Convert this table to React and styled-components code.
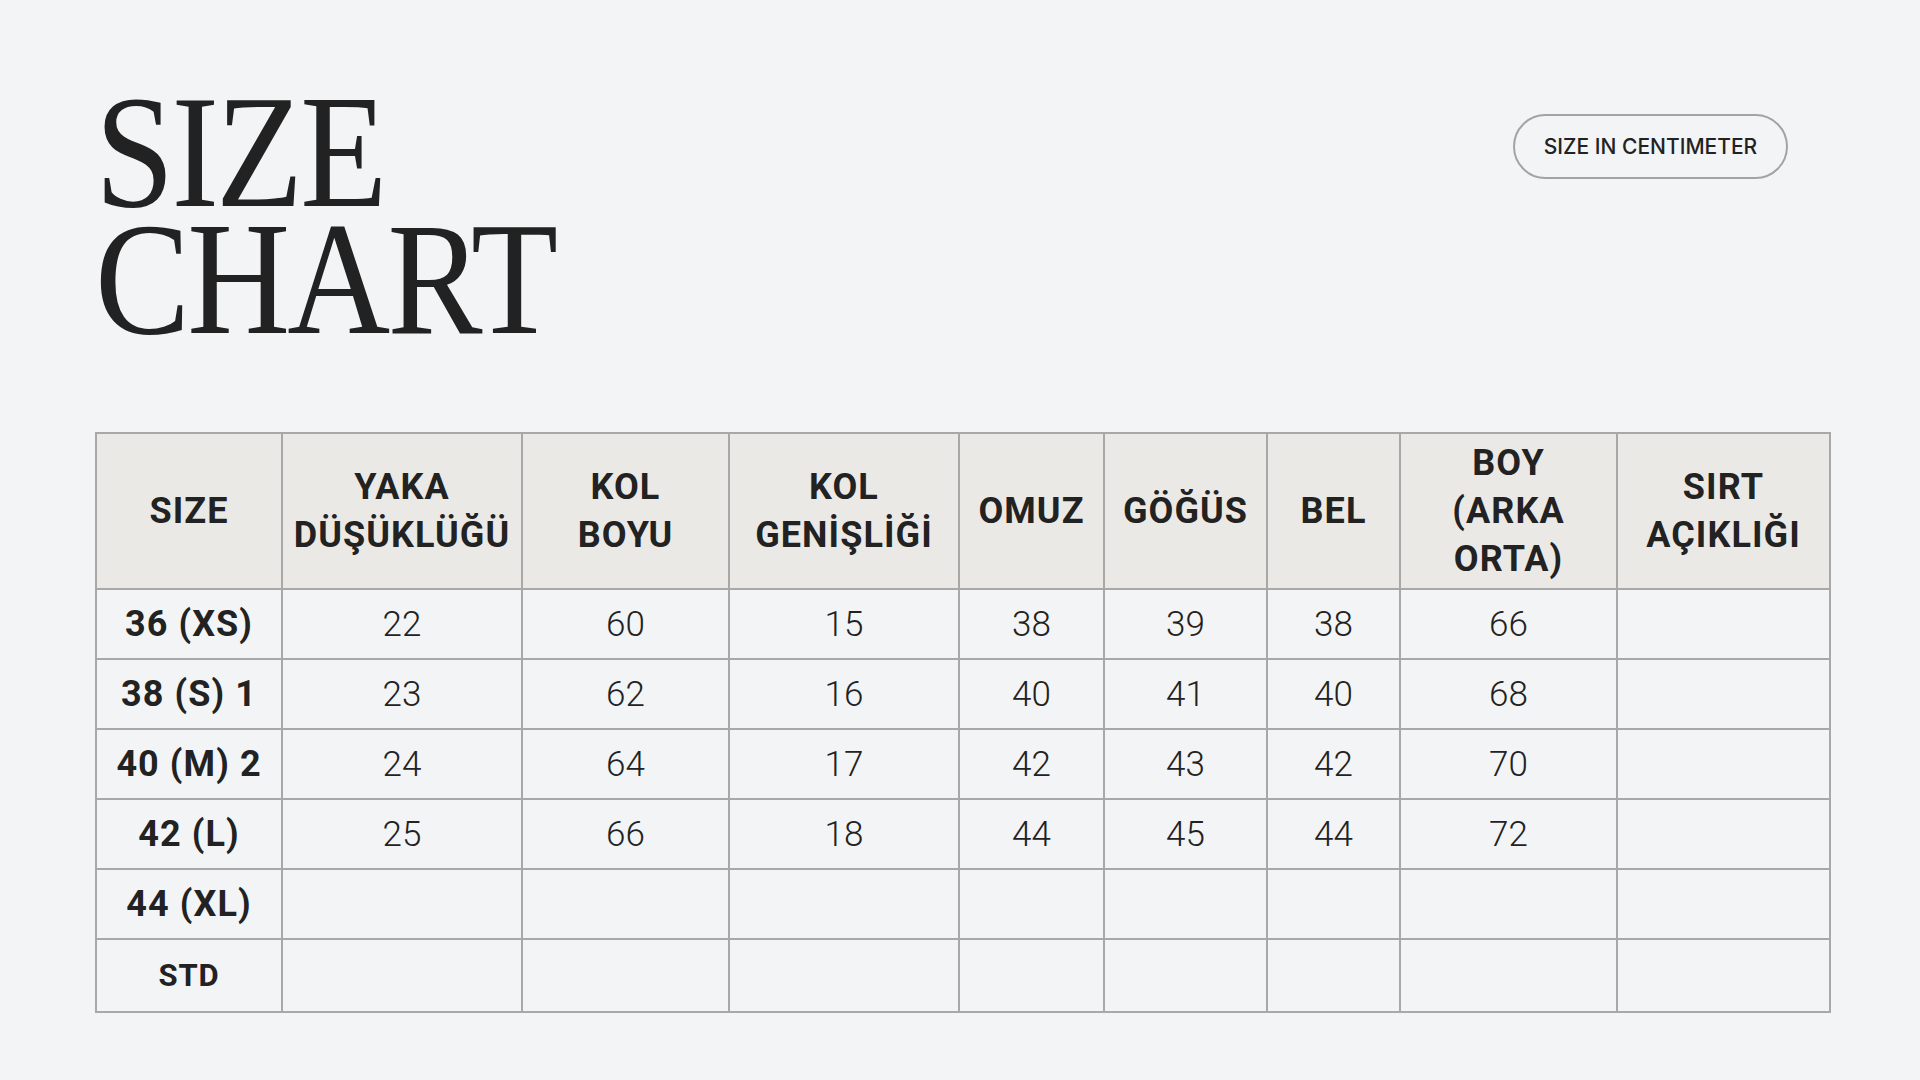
import styled, { createGlobalStyle } from 'styled-components';

const GlobalStyle = createGlobalStyle`
  html, body {
    margin: 0;
    padding: 0;
    background: #f3f4f6;
  }
  body {
    font-family: Roboto, "Liberation Sans", sans-serif;
    color: #222;
  }
`;

const columns = [
  { label: ['SIZE'], width: 186 },
  { label: ['YAKA', 'DÜŞÜKLÜĞÜ'], width: 240 },
  { label: ['KOL', 'BOYU'], width: 207 },
  { label: ['KOL', 'GENİŞLİĞİ'], width: 230 },
  { label: ['OMUZ'], width: 145 },
  { label: ['GÖĞÜS'], width: 163 },
  { label: ['BEL'], width: 133 },
  { label: ['BOY', '(ARKA', 'ORTA)'], width: 217 },
  { label: ['SIRT', 'AÇIKLIĞI'], width: 213 },
];

const rows = [
  { size: '36 (XS)', values: ['22', '60', '15', '38', '39', '38', '66', ''] },
  { size: '38 (S) 1', values: ['23', '62', '16', '40', '41', '40', '68', ''] },
  { size: '40 (M) 2', values: ['24', '64', '17', '42', '43', '42', '70', ''] },
  { size: '42 (L)', values: ['25', '66', '18', '44', '45', '44', '72', ''] },
  { size: '44 (XL)', values: ['', '', '', '', '', '', '', ''] },
  { size: 'STD', small: true, values: ['', '', '', '', '', '', '', ''] },
];

export default function App () {
  return (
    <>
      <GlobalStyle />
      <Page>
        <Top>
          <Title>
            <Line>SIZE</Line>
            <Line>CHART</Line>
          </Title>
          <Badge>SIZE IN CENTIMETER</Badge>
        </Top>
        <Table>
          <colgroup>
            {columns.map((c, i) => <col key={i} style={{ width: c.width }} />)}
          </colgroup>
          <thead>
            <tr>
              {columns.map((c, i) => (
                <HeadCell key={i}>
                  {c.label.map((l, j) => <div key={j}>{l}</div>)}
                </HeadCell>
              ))}
            </tr>
          </thead>
          <tbody>
            {rows.map((r, i) => (
              <Row key={i} last={i === rows.length - 1 ? 'true' : undefined}>
                <SizeCell small={r.small ? 'true' : undefined}>{r.size}</SizeCell>
                {r.values.map((v, j) => <Cell key={j}>{v}</Cell>)}
              </Row>
            ))}
          </tbody>
        </Table>
      </Page>
    </>
  );
}

const Page = styled.div`
  width: 1920px;
  height: 1080px;
  box-sizing: border-box;
  padding: 88px 90px 0 95px;
  display: flex;
  flex-direction: column;
  gap: 90px;
`;
const Top = styled.div`
  display: flex;
  justify-content: space-between;
  align-items: flex-start;
  height: 254px;
`;
const Title = styled.h1`
  margin: 0;
  font-family: "Liberation Serif", "DejaVu Serif", serif;
  font-weight: 400;
  font-size: 162px;
  line-height: 127px;
  color: #222;
  transform: scaleX(0.88);
  transform-origin: left top;
`;
const Line = styled.div`
  white-space: nowrap;
  letter-spacing: -0.02em;
`;
const Badge = styled.div`
  margin-top: 26px;
  margin-right: 42px;
  width: 275px;
  height: 65px;
  box-sizing: border-box;
  border: 2px solid #a3a3a3;
  border-radius: 33px;
  display: flex;
  align-items: center;
  justify-content: center;
  font-family: Inter, "Liberation Sans", sans-serif;
  font-weight: 500;
  font-size: 21px;
  color: #222;
`;
const Table = styled.table`
  width: 1734px;
  border-collapse: collapse;
  table-layout: fixed;
  border: 2px solid #a8a8a8;
`;
const HeadCell = styled.th`
  height: 154px;
  padding: 0;
  background: #ebe9e6;
  border: 2px solid #a8a8a8;
  font-size: 36px;
  font-weight: 700;
  letter-spacing: 0.03em;
  line-height: 48px;
  text-align: center;
  vertical-align: middle;
  color: #222;
`;
const Row = styled.tr`
  height: ${p => p.last ? '73px' : '70px'};
`;
const Cell = styled.td`
  padding: 0;
  border: 2px solid #a8a8a8;
  text-align: center;
  vertical-align: middle;
  font-size: 35px;
  font-weight: 300;
  color: #222;
`;
const SizeCell = styled(Cell)`
  font-weight: 700;
  font-size: ${p => p.small ? '31px' : '36px'};
  letter-spacing: 0.03em;
`;
